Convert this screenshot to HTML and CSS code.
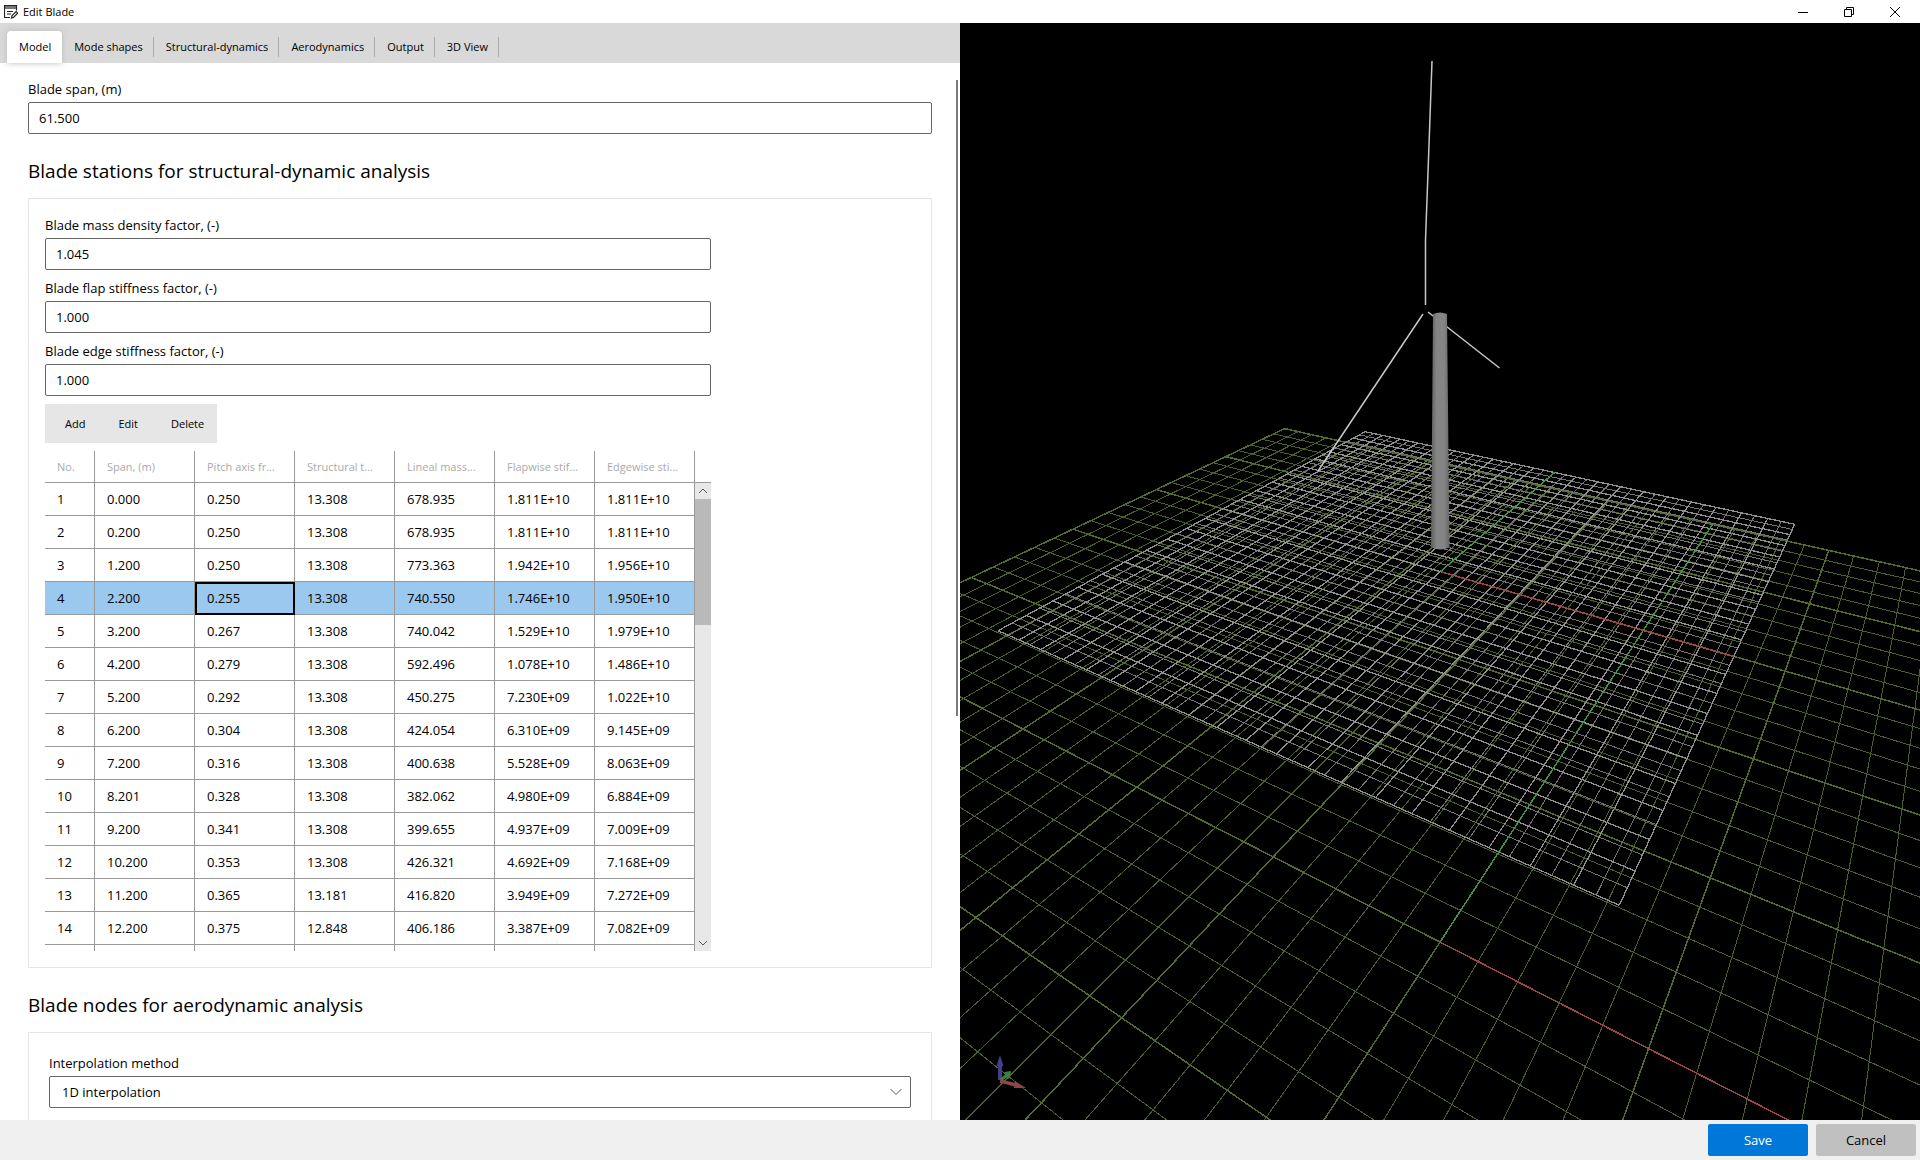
FILE: index.html
```html
<!DOCTYPE html>
<html lang="en">
<head>
<meta charset="utf-8">
<title>Edit Blade</title>
<link rel="stylesheet" href="styles.css">
</head>
<body>
<header class="titlebar">
  <svg class="app-icon" viewBox="0 0 14 14" aria-hidden="true">
    <path d="M1 1h11v3H1z" fill="#777"/>
    <path d="M6 12.500H.5V.5h12v5M3 6.500h6M3 9h4" fill="none" stroke="#222" stroke-width="1.200"/>
    <path d="M7.500 13l.6-2.400 4-4 1.600 1.600-4 4z" fill="#fff" stroke="#222" stroke-width="1.200"/>
  </svg>
  <h1 class="window-title">Edit Blade</h1>
  <div class="window-controls">
    <button class="window-button" aria-label="Minimize"><svg viewBox="0 0 10 10"><path d="M0 5.500h10"/></svg></button>
    <button class="window-button" aria-label="Restore"><svg viewBox="0 0 10 10"><path d="M.5 2.500h7v7h-7zM2.500 2.500v-2h7v7h-2"/></svg></button>
    <button class="window-button" aria-label="Close"><svg viewBox="0 0 10 10"><path d="M0 0l10 10M10 0L0 10"/></svg></button>
  </div>
</header>

<main class="workspace">
  <section class="editor">
    <nav class="tabs" role="tablist">
      <button class="tab tab-active" role="tab" aria-selected="true">Model</button>
      <button class="tab" role="tab">Mode shapes</button>
      <button class="tab" role="tab">Structural-dynamics</button>
      <button class="tab" role="tab">Aerodynamics</button>
      <button class="tab" role="tab">Output</button>
      <button class="tab" role="tab">3D View</button>
    </nav>
    <div class="page">
      <div class="field">
        <label for="span">Blade span, (m)</label>
        <input class="box" id="span" type="text" value="61.500">
      </div>

      <h2 class="heading">Blade stations for structural-dynamic analysis</h2>
      <section class="panel">
        <div class="stations">
          <div class="field">
            <label for="mass">Blade mass density factor, (-)</label>
            <input class="box" id="mass" type="text" value="1.045">
          </div>
          <div class="field">
            <label for="flap">Blade flap stiffness factor, (-)</label>
            <input class="box" id="flap" type="text" value="1.000">
          </div>
          <div class="field">
            <label for="edge">Blade edge stiffness factor, (-)</label>
            <input class="box" id="edge" type="text" value="1.000">
          </div>
          <div class="toolbar">
            <button class="tool">Add</button>
            <button class="tool">Edit</button>
            <button class="tool">Delete</button>
          </div>
          <div class="grid">
            <table class="table">
              <thead>
                <tr><th>No.</th><th>Span, (m)</th><th>Pitch axis fr...</th><th>Structural t...</th><th>Lineal mass...</th><th>Flapwise stif...</th><th>Edgewise sti...</th></tr>
              </thead>
              <tbody>
                <tr><td>1</td><td>0.000</td><td>0.250</td><td>13.308</td><td>678.935</td><td>1.811E+10</td><td>1.811E+10</td></tr>
                <tr><td>2</td><td>0.200</td><td>0.250</td><td>13.308</td><td>678.935</td><td>1.811E+10</td><td>1.811E+10</td></tr>
                <tr><td>3</td><td>1.200</td><td>0.250</td><td>13.308</td><td>773.363</td><td>1.942E+10</td><td>1.956E+10</td></tr>
                <tr class="selected"><td>4</td><td>2.200</td><td class="current">0.255</td><td>13.308</td><td>740.550</td><td>1.746E+10</td><td>1.950E+10</td></tr>
                <tr><td>5</td><td>3.200</td><td>0.267</td><td>13.308</td><td>740.042</td><td>1.529E+10</td><td>1.979E+10</td></tr>
                <tr><td>6</td><td>4.200</td><td>0.279</td><td>13.308</td><td>592.496</td><td>1.078E+10</td><td>1.486E+10</td></tr>
                <tr><td>7</td><td>5.200</td><td>0.292</td><td>13.308</td><td>450.275</td><td>7.230E+09</td><td>1.022E+10</td></tr>
                <tr><td>8</td><td>6.200</td><td>0.304</td><td>13.308</td><td>424.054</td><td>6.310E+09</td><td>9.145E+09</td></tr>
                <tr><td>9</td><td>7.200</td><td>0.316</td><td>13.308</td><td>400.638</td><td>5.528E+09</td><td>8.063E+09</td></tr>
                <tr><td>10</td><td>8.201</td><td>0.328</td><td>13.308</td><td>382.062</td><td>4.980E+09</td><td>6.884E+09</td></tr>
                <tr><td>11</td><td>9.200</td><td>0.341</td><td>13.308</td><td>399.655</td><td>4.937E+09</td><td>7.009E+09</td></tr>
                <tr><td>12</td><td>10.200</td><td>0.353</td><td>13.308</td><td>426.321</td><td>4.692E+09</td><td>7.168E+09</td></tr>
                <tr><td>13</td><td>11.200</td><td>0.365</td><td>13.181</td><td>416.820</td><td>3.949E+09</td><td>7.272E+09</td></tr>
                <tr><td>14</td><td>12.200</td><td>0.375</td><td>12.848</td><td>406.186</td><td>3.387E+09</td><td>7.082E+09</td></tr>
                <tr><td></td><td></td><td></td><td></td><td></td><td></td><td></td></tr>
              </tbody>
            </table>
            <div class="scrollbar">
              <svg class="arrow" viewBox="0 0 16 16"><path d="M4 10l4-4 4 4"/></svg>
              <div class="track"><div class="thumb"></div></div>
              <svg class="arrow" viewBox="0 0 16 16"><path d="M4 6l4 4 4-4"/></svg>
            </div>
          </div>
        </div>
      </section>

      <h2 class="heading">Blade nodes for aerodynamic analysis</h2>
      <section class="panel panel-nodes">
        <div class="field">
          <label for="method">Interpolation method</label>
          <div class="select">
            <select class="box" id="method"><option>1D interpolation</option></select>
            <svg class="chevron" viewBox="0 0 12 8"><path d="M.5 1L6 6.500 11.500 1"/></svg>
          </div>
        </div>
      </section>
    </div>
    <div class="page-thumb"></div>
  </section>

  <section class="viewport">
    <svg class="scene" viewBox="960 23 960 1097" preserveAspectRatio="xMidYMid slice">
      <defs>
        <linearGradient id="steel">
          <stop offset="0" stop-color="#5c5c5c"/>
          <stop offset=".3" stop-color="#858585"/>
          <stop offset=".7" stop-color="#858585"/>
          <stop offset="1" stop-color="#666"/>
        </linearGradient>
      </defs>
      <g id="ground"></g>
      <g id="water"></g>
      <g class="blades">
        <path d="M1432 61L1429 145L1425.500 240V305M1423 314L1318 471M1428 312L1499.500 368"/>
      </g>
      <path d="M1433 314q7-3 14 0L1449.500 547q-9 5-18.500 0z" fill="url(#steel)"/>
      <g>
        <path d="M1000 1080v-18" stroke="#40408c" stroke-width="4"/>
        <path d="M1000 1055l3.500 11h-7z" fill="#40408c"/>
        <path d="M1001 1080l6-5" stroke="#3c803c" stroke-width="3"/>
        <path d="M1004 1072l7-1-1 7-3 1z" fill="#3c803c"/>
        <path d="M1000 1081l16 4" stroke="#8c4646" stroke-width="3.500"/>
        <path d="M1015 1081l11 7-12 0z" fill="#8c4646"/>
      </g>
    </svg>
  </section>
</main>

<footer class="actions">
  <button class="action action-primary">Save</button>
  <button class="action">Cancel</button>
</footer>
<script src="scene.js"></script>
</body>
</html>
```
FILE: styles.css
```css
* { box-sizing: border-box; }

body {
  margin: 0;
  height: 100vh;
  display: flex;
  flex-direction: column;
  overflow: hidden;
  background: #fff;
  color: #000;
  font: 13px/20px "Open Sans", "Noto Sans", sans-serif;
}

button, input, select { font: inherit; color: inherit; margin: 0; }
button { border: 0; padding: 0; background: none; }

.titlebar {
  flex: none;
  height: 23px;
  display: flex;
  align-items: center;
  gap: 5px;
  padding: 0 2px 0 4px;
}
.app-icon { width: 14px; height: 14px; }
.window-title { margin: 0; font-size: 11px; font-weight: 400; line-height: 20px; }
.window-controls { margin-left: auto; display: flex; }
.window-button { width: 46px; height: 20px; display: grid; place-items: center; }
.window-button svg { width: 10px; height: 10px; fill: none; stroke: #000; }

.workspace { flex: 1; min-height: 0; display: grid; grid-template-columns: 1fr 1fr; }
.editor { position: relative; min-height: 0; display: flex; flex-direction: column; }

.tabs {
  flex: none;
  height: 40px;
  padding: 8px 0 0 7px;
  display: flex;
  align-items: center;
  background: #d9d9d9;
}
.tab { height: 20px; padding: 0 10px 0 12px; border-right: 1px solid #aaa; font-size: 11px; line-height: 20px; }
.tab-active {
  height: 32px;
  padding: 0 11px 0 12px;
  border: 0;
  border-radius: 4px 4px 0 0;
  background: #fff;
  box-shadow: 0 0 6px #bbb;
}

.page { flex: 1; min-height: 0; overflow: hidden; padding: 16px 28px 0; }
.page-thumb {
  position: absolute;
  top: 57px;
  right: 2px;
  width: 2px;
  height: 58%;
  background: #7a7a7a;
}

.field { display: flex; flex-direction: column; gap: 3px; }
.box {
  width: 100%;
  height: 32px;
  padding: 0 10px;
  border: 1px solid #666;
  border-radius: 2px;
  background: #fff;
  appearance: none;
}

.heading { margin: 24px 0 14px; font-size: 19px; font-weight: 400; line-height: 26px; }

.panel { border: 1px solid #e5e5e5; padding: 16px; }
.panel-nodes { padding: 20px; height: 200px; }
.stations { max-width: 666px; display: flex; flex-direction: column; gap: 8px; }

.toolbar { align-self: flex-start; height: 39px; padding: 0 4px; display: flex; background: #e6e6e6; }
.tool { padding: 0 9px 0 16px; font-size: 11px; }
.tool + .tool { padding-left: 24px; }

.grid { display: flex; height: 500px; overflow: hidden; background: linear-gradient(#999, #999) 0 31px / 100% 1px no-repeat; }
.table { flex: 1; width: 100%; table-layout: fixed; border-collapse: separate; border-spacing: 0; height: 0; }
.table th, .table td {
  height: 33px;
  padding: 0 0 0 12px;
  border-right: 1px solid #999;
  border-bottom: 1px solid #999;
  text-align: left;
  font-weight: 400;
  white-space: nowrap;
}
.table th { height: 32px; color: #aaa; font-size: 11px; }
.table th:first-child { width: 50px; }
.selected td { background: #9bc8ee; }
.table .current { outline: 2px solid #000; outline-offset: -2px; }

.scrollbar { flex: none; width: 16px; margin-top: 32px; display: flex; flex-direction: column; background: #e8e8e8; }
.arrow { height: 16px; fill: none; stroke: #555; }
.track { flex: 1; }
.thumb { height: 29%; background: #b9b9b9; }

.select { position: relative; }
.select .box { padding-left: 12px; }
.chevron { position: absolute; right: 9px; top: 12px; width: 12px; height: 8px; fill: none; stroke: #555; pointer-events: none; }

.viewport { min-height: 0; overflow: hidden; background: #000; }
.scene { display: block; width: 100%; height: 100%; }
.scene path, .scene line { fill: none; }
.scene path[fill] { fill: revert-layer; }
.scene line { shape-rendering: crispEdges; }
.blades { stroke: #c8c8c8; stroke-width: 1.5px; }
.ground-minor { stroke: #4b5f28; }
.ground-major { stroke: #546c2b; stroke-width: 1.5px; }
.water-minor { stroke: #747474; }
.water-major { stroke: #909090; stroke-width: 1.3px; }
.axis-x { stroke: #9c4648; stroke-width: 1.5px; }
.axis-y { stroke: #409048; stroke-width: 1.5px; }

.actions {
  flex: none;
  height: 40px;
  padding: 4px;
  display: flex;
  justify-content: flex-end;
  gap: 8px;
  background: #f0f0f0;
}
.action { width: 100px; height: 32px; border-radius: 2px; background: #c0c0c0; }
.action-primary { background: #0078d9; color: #fff; }
```
FILE: scene.js
```js
// Draws the two perspective grids of the 3D view.

// Least-squares homography from plane points to screen points.
function fitPlane(pairs) {
  const m = Array.from({ length: 8 }, () => new Array(9).fill(0));
  const add = (row, rhs) => {
    for (let i = 0; i < 8; i++) {
      for (let j = 0; j < 8; j++) m[i][j] += row[i] * row[j];
      m[i][8] += row[i] * rhs;
    }
  };
  for (const [px, py, sx, sy] of pairs) {
    const x = px / 25, y = py / 25, u = sx / 1000, v = sy / 1000;
    add([x, y, 1, 0, 0, 0, -u * x, -u * y], u);
    add([0, 0, 0, x, y, 1, -v * x, -v * y], v);
  }
  for (let c = 0; c < 8; c++) {
    let p = c;
    for (let r = c + 1; r < 8; r++) if (Math.abs(m[r][c]) > Math.abs(m[p][c])) p = r;
    [m[c], m[p]] = [m[p], m[c]];
    for (let r = 0; r < 8; r++) {
      if (r === c) continue;
      const f = m[r][c] / m[c][c];
      for (let k = c; k < 9; k++) m[r][k] -= f * m[c][k];
    }
  }
  return m.map((row, i) => row[8] / row[i]);
}

const depth = (h, p) => h[6] * p[0] / 25 + h[7] * p[1] / 25 + 1;

function project(h, p) {
  const x = p[0] / 25, y = p[1] / 25, w = depth(h, p);
  return [(h[0] * x + h[1] * y + h[2]) / w * 1000, (h[3] * x + h[4] * y + h[5]) / w * 1000];
}

function drawLine(group, h, a, b, name) {
  const near = 0.2, da = depth(h, a), db = depth(h, b);
  if (da < near && db < near) return;
  const cut = t => [a[0] + (b[0] - a[0]) * t, a[1] + (b[1] - a[1]) * t];
  const t = (near - da) / (db - da);
  const from = project(h, da < near ? cut(t) : a);
  const to = project(h, db < near ? cut(t) : b);
  const line = document.createElementNS("http://www.w3.org/2000/svg", "line");
  line.setAttribute("x1", from[0].toFixed(2));
  line.setAttribute("y1", from[1].toFixed(2));
  line.setAttribute("x2", to[0].toFixed(2));
  line.setAttribute("y2", to[1].toFixed(2));
  line.setAttribute("class", name);
  group.appendChild(line);
}

function drawGrid(group, h, half, every, name) {
  for (const major of [false, true]) {
    for (let i = -half; i <= half; i++) {
      if ((i % every === 0) !== major) continue;
      const style = name + (major ? "-major" : "-minor");
      drawLine(group, h, [i, -half], [i, half], style);
      drawLine(group, h, [-half, i], [half, i], style);
    }
  }
}

const ground = fitPlane([
  [0, 0, 1440, 942], [5, 0, 1648.7, 1048.7], [-5, 0, 1273.3, 857.3],
  [-10, 0, 1136.7, 787.3], [-15, 0, 1023, 729], [-5, -5, 1121.7, 1017.3],
  [-10, -5, 975.7, 917.3], [5, 5, 1710, 878], [5, 10, 1753.3, 759],
  [5, 20, 1810.3, 603.7], [5, 25, 1828, 550.7], [0, 25, 1712.7, 524],
  [-25, 25, 1284.7, 428.7]
]);
const water = fitPlane([
  [-20, -20, 998, 630.7], [-20, 20, 1365.3, 431.7],
  [20, 20, 1794.7, 524.3], [20, -20, 1619.3, 905.3]
]);

const groundGroup = document.getElementById("ground");
const waterGroup = document.getElementById("water");
drawGrid(groundGroup, ground, 25, 5, "ground");
drawGrid(waterGroup, water, 20, 2, "water");
drawLine(waterGroup, ground, [0, 0], [25, 0], "axis-x");
drawLine(waterGroup, ground, [0, 0], [0, 25], "axis-y");
drawLine(waterGroup, water, [0, 0], [20, 0], "axis-x");
drawLine(waterGroup, water, [0, 0], [0, 20], "axis-y");
```
